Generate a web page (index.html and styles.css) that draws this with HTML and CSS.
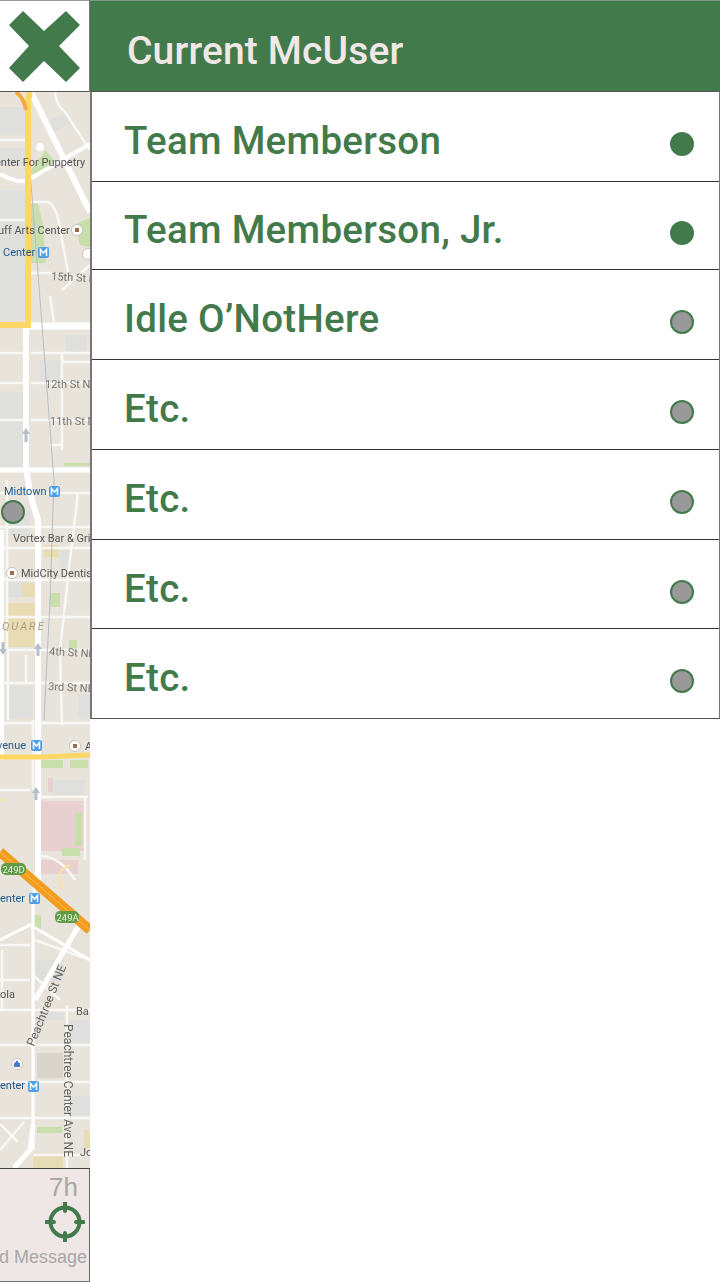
FILE: index.html
```html
<!DOCTYPE html>
<html lang="en">
<head>
    <meta charset="UTF-8">
    <meta name="viewport" content="width=device-width, initial-scale=1.0">
    <title>Team list</title>
    <link rel="stylesheet" href="styles.css">
</head>
<body>
    <div class="side">
        <button class="close-btn" aria-label="Close">
            <svg width="90" height="92" viewBox="0 0 90 92">
                <polygon points="9,25 23,11 44,31 66,11 80,25 59,46 80,68 66,82 44,61 23,82 9,68 29,46" fill="#437a4c"/>
            </svg>
        </button>

        <div class="map">
            <svg class="map-svg" width="90" height="1076" viewBox="0 92 90 1076">
                <rect x="0" y="92" width="90" height="1076" fill="#e8e4dc"/>

                <!-- grey building blocks -->
                <g fill="#dfdfde">
                    <rect x="0" y="107" width="25" height="28"/>
                    <rect x="0" y="148" width="25" height="18"/>
                    <rect x="0" y="190" width="25" height="130"/>
                    <polygon points="45,122 66,114 70,124 50,134"/>
                    <rect x="66" y="335" width="20" height="18"/>
                    <rect x="40" y="360" width="20" height="22"/>
                    <rect x="0" y="392" width="24" height="75"/>
                    <rect x="8" y="510" width="22" height="26"/>
                    <rect x="60" y="550" width="12" height="18"/>
                    <rect x="8" y="582" width="18" height="15"/>
                    <rect x="8" y="686" width="24" height="32"/>
                    <rect x="78" y="694" width="12" height="24"/>
                    <rect x="53" y="780" width="32" height="15"/>
                    <rect x="36" y="960" width="28" height="22"/>
                    <rect x="42" y="1012" width="22" height="8"/>
                    <rect x="66" y="1096" width="24" height="20"/>
                    <rect x="70" y="1020" width="20" height="24"/>
                </g>
                <rect x="37" y="1053" width="26" height="25" fill="#dad5cc"/>

                <!-- parks and lots -->
                <g fill="#c9dfab">
                    <polygon points="28,174 40,158 46,150 56,164 36,174"/>
                    <polygon points="30,203 38,203 43,225 46,263 30,263"/>
                    <polygon points="75,224 90,218 90,247 80,245"/>
                    <rect x="50" y="593" width="10" height="14"/>
                    <rect x="27" y="603" width="8" height="16"/>
                    <rect x="69" y="640" width="8" height="10"/>
                    <rect x="64" y="463" width="26" height="3"/>
                    <rect x="41" y="760" width="22" height="8"/>
                    <rect x="70" y="760" width="18" height="8"/>
                    <rect x="37" y="1127" width="25" height="6"/>
                    <rect x="33" y="915" width="8" height="16"/>
                </g>
                <g fill="#e8dcb4">
                    <rect x="8" y="603" width="27" height="44"/>
                    <rect x="44" y="545" width="15" height="12"/>
                    <rect x="22" y="583" width="13" height="14"/>
                    <rect x="33" y="1155" width="30" height="13"/>
                    <rect x="84" y="1130" width="6" height="18"/>
                </g>
                <g fill="#e8d0d0">
                    <rect x="39" y="801" width="45" height="50"/>
                    <rect x="48" y="778" width="5" height="14"/>
                    <rect x="40" y="860" width="38" height="14"/>
                </g>
                <g fill="#c9dfab">
                    <rect x="75" y="813" width="7" height="33"/>
                    <rect x="62" y="848" width="18" height="8"/>
                </g>

                <!-- streets -->
                <g fill="none" stroke="#f8f7f4" stroke-width="2.5">
                    <path d="M0 140H25M0 220H25"/>
                    <path d="M30 202H48Q58 206 62 240L68 272"/>
                    <path d="M55 92Q56 105 65 112L90 150"/>
                    <path d="M62 290 90 265M30 273H52M50 296 54 322"/>
                    <path d="M31 353H90M0 353H25M0 383H25M31 383H90M0 420H25M31 420H90"/>
                    <path d="M62 353V450M50 445H62M62 362H90"/>
                    <path d="M0 493H5M45 493H90M0 527H90M0 548H90M0 580H90M0 617H90"/>
                    <path d="M7 480V650M78 492 70 560 60 650 62 725M0 650H90M0 683H90M8 650V720M26 655V683"/>
                    <path d="M0 723H90M33 720V790M0 790H30M38 797H88M85 797V860"/>
                    <path d="M40 856Q60 856 75 880"/>
                    <path d="M0 945H30M35 940 90 960M0 980H30M33 975 60 1000M0 1010H90M0 1045H90M0 1082H90M0 1118H90M33 1155H90"/>
                    <path d="M2 950V1010M33 1010V1150M67 1005V1168M0 1124 18 1142M0 1150 24 1122"/>
                </g>
                <g fill="none" stroke="#fff" stroke-width="6">
                    <path d="M31 92 90 212"/>
                    <path d="M0 174Q18 184 28 180L90 144" stroke-width="4"/>
                    <path d="M28 326H90" stroke-width="7"/>
                    <path d="M26 326V465Q28 490 38 520V880"/>
                    <path d="M0 470H90" stroke-width="5"/>
                    <path d="M2 530V760" stroke-width="4"/>
                    <path d="M36 880 33 900 33 1150" stroke-width="3"/>
                    <path d="M0 940 30 925 90 960" stroke-width="3"/>
                    <path d="M35 1000 82 920" stroke-width="5"/>
                    <path d="M33 1125 30 1150 14 1168" stroke-width="5"/>
                </g>
                <circle cx="40" cy="147" r="4" fill="#fff"/>
                <path d="M30 170 54 480 50 600 44 720" fill="none" stroke="#b8bcc4" stroke-width="1"/>

                <!-- highways -->
                <path d="M30 92 28 100V325H0" fill="none" stroke="#fdd663" stroke-width="6"/>
                <path d="M16 92Q24 98 26 110" fill="none" stroke="#f5a93a" stroke-width="4"/>
                <path d="M0 757H40L90 755" fill="none" stroke="#fdd663" stroke-width="5"/>
                <path d="M0 852 90 930" fill="none" stroke="#f39c1f" stroke-width="10"/>
                <path d="M0 852 90 930" fill="none" stroke="#f7c04c" stroke-width="1"/>
                <path d="M70 865Q54 870 62 890M0 800H4" fill="none" stroke="#fbe3a0" stroke-width="2"/>

                <!-- up arrows on one way streets -->
                <g fill="#b4bfcc">
                    <path d="M26 428 30 434H27.500V442H24.500V434H22Z"/>
                    <path d="M38 643 42 649H39.500V656H36.500V649H34Z"/>
                    <path d="M3 655 7 649H4.500V642H1.500V649H-1Z"/>
                    <path d="M36 787 40 793H37.500V800H34.500V793H32Z"/>
                </g>

                <!-- labels -->
                <g class="map-label">
                    <text x="-5" y="165.500">enter For Puppetry</text>
                    <text x="-2" y="234">uff Arts Center</text>
                    <text x="3" y="256" class="map-transit">Center</text>
                    <text x="51" y="280" class="map-street" transform="rotate(3 51 280)">15th St NE</text>
                    <text x="45" y="388" class="map-street">12th St NE</text>
                    <text x="50" y="425" class="map-street">11th St NE</text>
                    <text x="4" y="495" class="map-transit">Midtown</text>
                    <text x="13" y="542">Vortex Bar &amp; Grill</text>
                    <text x="21" y="577">MidCity Dentistry</text>
                    <text x="2" y="630" class="map-area">QUARE</text>
                    <text x="49" y="655" class="map-street" transform="rotate(3 49 655)">4th St NE</text>
                    <text x="48" y="690" class="map-street" transform="rotate(3 48 690)">3rd St NE</text>
                    <text x="-3" y="749" class="map-transit">venue</text>
                    <text x="85" y="750">A</text>
                    <text x="0" y="902" class="map-transit">enter</text>
                    <text x="0" y="998">ola</text>
                    <text x="76" y="1015">Ba</text>
                    <text x="0" y="1089" class="map-transit">enter</text>
                    <text x="80" y="1156">Jo</text>
                    <text x="34" y="1047" class="map-street-dark" transform="rotate(-68 34 1047)">Peachtree St NE</text>
                    <text x="64" y="1024" class="map-street-dark" transform="rotate(90 64 1024)">Peachtree Center Ave NE</text>
                </g>

                <!-- metro markers -->
                <g class="map-metro">
                    <rect x="38" y="247" width="11" height="11" rx="2"/>
                    <rect x="49" y="486" width="11" height="11" rx="2"/>
                    <rect x="31" y="740" width="11" height="11" rx="2"/>
                    <rect x="29" y="893" width="11" height="11" rx="2"/>
                    <rect x="28" y="1081" width="11" height="11" rx="2"/>
                    <path d="M40.500 256V249.500L43.500 253 46.500 249.500V256M51.500 495V488.500L54.500 492 57.500 488.500V495M33.500 749V742.500L36.500 746 39.500 742.500V749M31.500 902V895.500L34.500 899 37.500 895.500V902M30.500 1090V1083.500L33.500 1087 36.500 1083.500V1090"/>
                </g>

                <!-- place markers -->
                <g fill="#fff" stroke="#c8c4bc">
                    <circle cx="77" cy="230" r="5.500"/>
                    <circle cx="12" cy="573" r="5.500"/>
                    <circle cx="75" cy="746" r="5.500"/>
                    <circle cx="88" cy="254" r="5.500"/>
                    <circle cx="17" cy="1064" r="5.500"/>
                </g>
                <g fill="#9c6b4c">
                    <rect x="75" y="228" width="4" height="4"/>
                    <rect x="10" y="571" width="4" height="4"/>
                    <rect x="73" y="744" width="4" height="4"/>
                </g>
                <path d="M14 1067V1063H20V1067ZM15 1063Q17 1058 19 1063" fill="#4a78c8"/>

                <!-- exit badges -->
                <rect x="1" y="863" width="25" height="12" rx="5" fill="#5e9c48"/>
                <rect x="55" y="911" width="24" height="12" rx="5" fill="#5e9c48"/>
                <text x="2.500" y="873" class="map-badge">249D</text>
                <text x="56.500" y="921" class="map-badge">249A</text>
            </svg>
            <!-- idle teammate on the map -->
            <span class="dot map-pin"></span>
        </div>

        <div class="status-card">
            <div class="status-time">7h</div>
            <svg class="status-target" width="40" height="40" viewBox="0 0 40 40">
                <circle cx="20" cy="20" r="14.500" fill="none" stroke="#437a4c" stroke-width="4"/>
                <path d="M20 1V9M20 31V39M1 20H9M31 20H39" stroke="#437a4c" stroke-width="4" stroke-linecap="round"/>
            </svg>
            <div class="status-msg">Received Message</div>
        </div>
    </div>

    <div class="panel">
        <div class="panel-head">Current McUser</div>
        <ul class="team-list">
            <li class="team-row">Team Memberson <span class="dot dot-on"></span></li>
            <li class="team-row">Team Memberson, Jr. <span class="dot dot-on"></span></li>
            <li class="team-row">Idle O’NotHere <span class="dot"></span></li>
            <li class="team-row">Etc. <span class="dot"></span></li>
            <li class="team-row">Etc. <span class="dot"></span></li>
            <li class="team-row">Etc. <span class="dot"></span></li>
            <li class="team-row">Etc. <span class="dot"></span></li>
        </ul>
    </div>
</body>
</html>
```

FILE: styles.css
```css
* {
    box-sizing: border-box;
}
body {
    margin: 0;
    height: 1282px;
    display: flex;
    font-family: Roboto, sans-serif;
    background-color: #fff;
    overflow: hidden;
}
.side {
    width: 90px;
    height: 1282px;
    display: flex;
    flex-direction: column;
}
.close-btn {
    height: 92px;
    padding: 0;
    border: 0;
    background-color: #fff;
    box-shadow: inset -1px 0 0 #777, inset 0 1px 0 #999, inset 0 -1px 0 #555;
}
.close-btn svg {
    display: block;
}
.map {
    position: relative;
    height: 1076px;
    overflow: hidden;
}
.map-svg {
    display: block;
    filter: blur(0.4px);
}
.map-label text {
    font-family: Roboto, sans-serif;
    font-size: 11px;
    fill: #555;
}
.map-label .map-transit {
    fill: #1f5a8c;
}
.map-label .map-street {
    fill: #77746e;
}
.map-label .map-street-dark {
    fill: #66645f;
    font-size: 12px;
}
.map-label .map-area {
    fill: #a89f80;
    font-style: italic;
    letter-spacing: 2px;
}
.map-metro rect {
    fill: #4f9fe8;
}
.map-metro path {
    fill: none;
    stroke: #fff;
    stroke-width: 1.5;
}
.map-badge {
    font-family: Roboto, sans-serif;
    font-size: 9.5px;
    fill: #e8f2dc;
}
.status-card {
    height: 114px;
    padding: 3px 2px 0 0;
    display: flex;
    flex-direction: column;
    align-items: flex-end;
    overflow: hidden;
    font-family: "Liberation Sans", Arial, sans-serif;
    color: #a8a6a6;
    background-color: #efe6e6;
    border-top: 1px solid #444;
    border-right: 1px solid #666;
    border-bottom: 1px solid #777;
}
.status-time {
    margin-right: 9px;
    font-size: 26px;
    line-height: 30px;
}
.status-target {
    margin-right: 2px;
}
.status-msg {
    margin-top: 4px;
    font-size: 18px;
    line-height: 22px;
    white-space: nowrap;
}
.panel {
    width: 630px;
    height: 719px;
    display: flex;
    flex-direction: column;
}
.panel-head {
    height: 91px;
    padding: 11px 0 0 37px;
    display: flex;
    align-items: center;
    font-size: 39px;
    font-weight: 500;
    letter-spacing: 0.15px;
    color: #f0e8e6;
    background-color: #437a4c;
    box-shadow: inset 0 1px 0 #7a9a80;
}
.team-list {
    flex: 1;
    margin: 0;
    padding: 0;
    list-style: none;
    border: 1px solid #555;
    border-left: 2px solid #777;
    border-right-color: #777;
}
.team-row {
    height: 90px;
    padding: 8px 25px 0 32px;
    display: flex;
    align-items: center;
    justify-content: space-between;
    font-size: 38.500px;
    font-weight: 500;
    letter-spacing: 0.3px;
    color: #437a4c;
    border-bottom: 1px solid #333;
}
.team-row:nth-child(2) {
    height: 88px;
}
.team-row:nth-child(6) {
    height: 89px;
}
.team-row:last-child {
    height: 89px;
    border-bottom: 0;
}
.dot {
    width: 24px;
    height: 24px;
    margin-top: 7px;
    border-radius: 50%;
    background-color: #999;
    border: 2px solid #437a4c;
}
.dot-on {
    background-color: #437a4c;
}
.map-pin {
    position: absolute;
    left: 1px;
    top: 408px;
    margin: 0;
}
```
